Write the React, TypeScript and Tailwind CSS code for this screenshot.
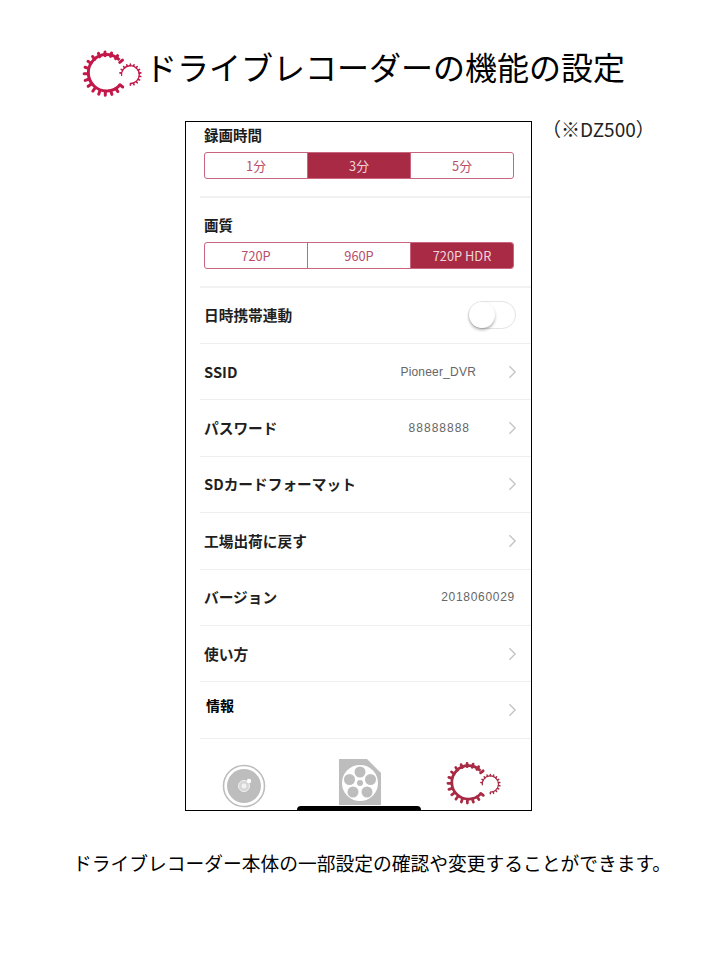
const font = { fontFamily: '"Noto Sans CJK JP", "Noto Sans", sans-serif' };
const valueFont = { fontFamily: '"Liberation Sans", "Noto Sans CJK JP", sans-serif' };

// teeth around an arc, angles in degrees, 0 = right and clockwise on screen
function teeth(cx: number, cy: number, r1: number, r2: number, from: number, to: number, step: number) {
  const out: string[] = [];
  for (let a = from; a <= to; a += step) {
    const t = (a * Math.PI) / 180;
    out.push(
      `M${(cx + r1 * Math.cos(t)).toFixed(2)} ${(cy + r1 * Math.sin(t)).toFixed(2)}L${(cx + r2 * Math.cos(t)).toFixed(2)} ${(cy + r2 * Math.sin(t)).toFixed(2)}`
    );
  }
  return out.join("");
}

function GearLogo({ className }: { className?: string }) {
  return (
    <svg viewBox="0 0 60 48" className={className} fill="none" stroke="currentColor">
      <path d="M37.5 10 A18.2 18.2 0 1 0 38 35" strokeWidth="3" />
      <path d={teeth(23.7, 23.7, 18, 21.6, 38, 322, 17.7)} strokeWidth="3" strokeLinecap="round" />
      <path d="M39.6 26 A8.9 8.9 0 1 1 48 33.5" strokeWidth="1.3" />
      <path d={teeth(48.4, 24.7, 9, 10.6, -170, 95, 20)} strokeWidth="1.6" strokeLinecap="round" />
    </svg>
  );
}

function Chevron() {
  return (
    <svg viewBox="0 0 10 16" className="h-[14px] w-[9px] text-[#c4c4c6]" fill="none" stroke="currentColor" strokeWidth="1.6">
      <path d="M1.5 1.5 L8 8 L1.5 14.5" />
    </svg>
  );
}

function Segments({ label, items, active }: { label: string; items: string[]; active: number }) {
  return (
    <div className="pl-[4px]">
      <div className="text-[14.5px] leading-[20px] font-bold text-[#1c1c1c]">{label}</div>
      <div className="mt-[7px] mr-[17px] flex h-[27px] overflow-hidden rounded-[3px] border border-[#c9667f]">
        {items.map((item, i) => (
          <div
            key={item}
            className={
              "flex flex-1 items-center justify-center text-[12.8px] " +
              (i === active ? "bg-[#a82a44] text-[#ecd3d9]" : "text-[#b8506a]") +
              (i > 0 ? " border-l border-[#c9667f]" : "")
            }
          >
            {item}
          </div>
        ))}
      </div>
    </div>
  );
}

function Row({
  label,
  value,
  valueClass = "",
  labelClass = "text-[14.7px] text-[#1f1f1f]",
  chevron = true,
}: {
  label: string;
  value?: string;
  valueClass?: string;
  labelClass?: string;
  chevron?: boolean;
}) {
  return (
    <div className="flex h-[56.4px] items-center border-b border-[#efeff0] pr-[14px] pl-[4px]">
      <span className={"font-bold " + labelClass}>{label}</span>
      <span className={"ml-auto text-[12px] text-[#666] " + valueClass} style={valueFont}>
        {value}
      </span>
      {chevron && <Chevron />}
    </div>
  );
}

export default function App() {
  return (
    <div className="h-[960px] w-[720px] bg-white" style={font}>
      <div className="flex h-[121px] items-start pt-[43px] pl-[82px]">
        <GearLogo className="mt-[7px] h-[48px] w-[60px] shrink-0 text-[#c2194a]" />
        <h1 className="ml-[3px] text-[32px] leading-[46px] whitespace-nowrap text-black">
          ドライブレコーダーの機能の設定
        </h1>
      </div>

      <div className="flex items-start pl-[185px]">
        <div className="relative h-[690px] w-[347px] overflow-hidden border border-black pl-[14px]">
          <div className="h-[76px] border-b-2 border-[#f1f1f2] pt-[3px]">
            <Segments label="録画時間" items={["1分", "3分", "5分"]} active={1} />
          </div>
          <div className="h-[90px] border-b-2 border-[#f1f1f2] pt-[17px]">
            <Segments label="画質" items={["720P", "960P", "720P HDR"]} active={2} />
          </div>
          <div className="flex h-[56px] items-center border-b border-[#efeff0] pr-[15px] pl-[4px]">
            <span className="-mt-[1px] text-[14.7px] font-bold text-[#1f1f1f]">日時携帯連動</span>
            <div className="-mt-[2px] ml-auto h-[28px] w-[48px] rounded-full border border-[#e4e4e4] bg-white">
              <div className="h-[26px] w-[26px] rounded-full bg-white shadow-[0_2px_3px_rgba(0,0,0,0.3)]" />
            </div>
          </div>
          <Row label="SSID" value="Pioneer_DVR" valueClass="mr-[32px] tracking-[0.2px]" />
          <Row label="パスワード" value="88888888" valueClass="mr-[38px] tracking-[1px]" />
          <Row label="SDカードフォーマット" />
          <Row label="工場出荷に戻す" />
          <Row label="バージョン" value="2018060029" valueClass="mr-[2px] tracking-[0.7px]" chevron={false} />
          <Row label="使い方" />
          <Row label="情報" labelClass="-mt-[9px] ml-[2px] text-[14px] text-black" />

          <div className="flex items-start pt-[20px]">
            <svg viewBox="0 0 44 44" className="mt-[5px] ml-[22px] h-[44px] w-[44px]">
              <circle cx="22" cy="22" r="20.5" fill="none" stroke="#bdbdbd" strokeWidth="1.6" />
              <circle cx="22" cy="22" r="17" fill="#bdbdbd" />
              <circle cx="22" cy="22" r="5.5" fill="#d6d6d6" stroke="#f2f2f2" strokeWidth="1" />
              <circle cx="22" cy="22" r="2.5" fill="#f2f2f2" />
              <circle cx="27" cy="17" r="2.2" fill="#fff" />
            </svg>
            <svg viewBox="0 0 42 46" className="ml-[73px] h-[46px] w-[42px]">
              <path d="M0 0 H28 L42 14 V46 H0 Z" fill="#bdbdbd" />
              <circle cx="21" cy="24" r="18" fill="#fff" />
              <circle cx="21" cy="13" r="5.5" fill="#bdbdbd" />
              <circle cx="10.5" cy="20.5" r="5.5" fill="#bdbdbd" />
              <circle cx="31.5" cy="20.5" r="5.5" fill="#bdbdbd" />
              <circle cx="14" cy="33" r="5.5" fill="#bdbdbd" />
              <circle cx="28" cy="33" r="5.5" fill="#bdbdbd" />
              <circle cx="21" cy="24" r="3" fill="#bdbdbd" />
            </svg>
            <GearLogo className="mt-[2px] ml-[65px] h-[45px] w-[55px] text-[#a82a44]" />
          </div>
          <div className="absolute bottom-0 left-[111px] h-[4px] w-[124px] rounded-t-full bg-black" />
        </div>
        <div className="ml-[10px] text-[19px] leading-[16px] whitespace-nowrap text-[#222]">（※DZ500）</div>
      </div>

      <p className="mt-[39px] pl-[73px] text-[18.75px] leading-[26px] whitespace-nowrap text-black">
        ドライブレコーダー本体の一部設定の確認や変更することができます。
      </p>
    </div>
  );
}
